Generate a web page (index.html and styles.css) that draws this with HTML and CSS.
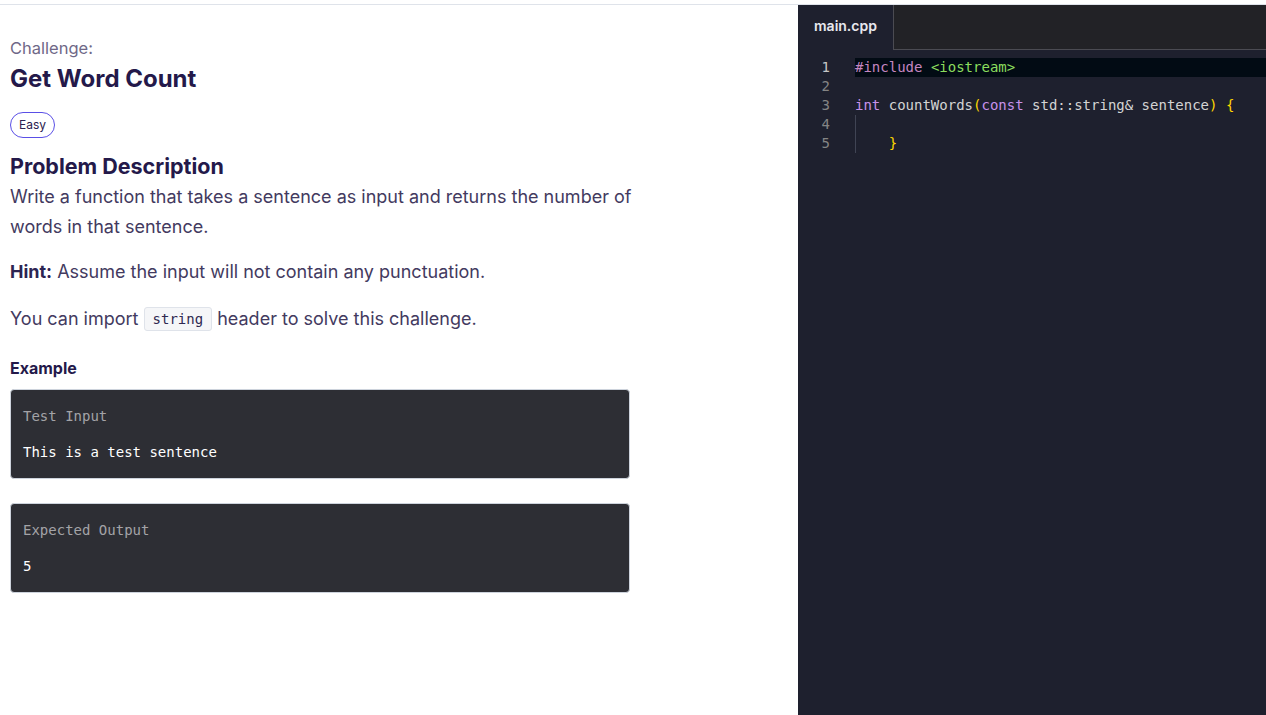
FILE: index.html
```html
<!DOCTYPE html>
<html>
<head>
<meta charset="utf-8">
<link rel="stylesheet" href="styles.css">
</head>
<body>
<div class="topline"></div>
<div class="page">
  <section class="left">
    <div class="content">
      <div class="eyebrow">Challenge:</div>
      <h1 class="title">Get Word Count</h1>
      <span class="badge">Easy</span>
      <h2 class="section-title">Problem Description</h2>
      <p class="para">Write a function that takes a sentence as input and returns the number of words in that sentence.</p>
      <p class="para hint"><strong>Hint:</strong> Assume the input will not contain any punctuation.</p>
      <p class="para import">You can import <code class="inline-code">string</code> header to solve this challenge.</p>
      <h3 class="example-title">Example</h3>
      <div class="example-box">
        <div class="box-label">Test Input</div>
        <div class="box-value">This is a test sentence</div>
      </div>
      <div class="example-box">
        <div class="box-label">Expected Output</div>
        <div class="box-value">5</div>
      </div>
    </div>
  </section>
  <section class="editor">
    <div class="tabbar">
      <div class="tab">main.cpp</div>
      <div class="tab-rest"></div>
    </div>
    <div class="code">
      <div class="line active"><span class="ln">1</span><span class="src"><span class="k-pre">#include</span> <span class="k-inc">&lt;iostream&gt;</span></span></div>
      <div class="line"><span class="ln">2</span><span class="src"></span></div>
      <div class="line"><span class="ln">3</span><span class="src"><span class="k-kw">int</span> countWords<span class="k-br">(</span><span class="k-kw">const</span> std::string&amp; sentence<span class="k-br">)</span> <span class="k-br">{</span></span></div>
      <div class="line"><span class="ln">4</span><span class="src"><span class="guide"></span></span></div>
      <div class="line"><span class="ln">5</span><span class="src"><span class="guide"></span>    <span class="k-br">}</span></span></div>
    </div>
  </section>
</div>
</body>
</html>
```

FILE: styles.css
```css
* { box-sizing: border-box; }
html, body { margin: 0; padding: 0; height: 100%; }
body {
  background: #ffffff;
  font-family: "Inter", "Noto Sans", sans-serif;
  overflow: hidden;
}
.topline {
  height: 5px;
  border-bottom: 1px solid #dfe3ea;
}
.page {
  display: flex;
  height: 710px;
}
.left {
  width: 798px;
  flex: none;
  background: #ffffff;
}
.content {
  width: 660px;
  padding: 33px 0 0 10px;
}
.eyebrow {
  font-size: 16.5px;
  line-height: 20px;
  color: #6f6887;
  font-weight: 400;
}
.title {
  margin: 6px 0 0;
  font-size: 24px;
  line-height: 30px;
  font-weight: 700;
  color: #24194a;
}
.badge {
  display: inline-block;
  margin-top: 18px;
  height: 26px;
  padding: 0 8px;
  border: 1px solid #5a4fe6;
  border-radius: 13px;
  font-size: 12px;
  line-height: 24px;
  color: #2c2250;
}
.section-title {
  margin: 12px 0 0;
  font-size: 21.5px;
  line-height: 32px;
  font-weight: 700;
  color: #24194a;
}
.para {
  margin: 0;
  font-size: 18px;
  line-height: 30px;
  color: #433a60;
}
.hint { margin-top: 15px; }
.hint strong { font-weight: 700; color: #2c2452; }
.import { margin-top: 17px; }
.inline-code {
  display: inline-block;
  font-family: "DejaVu Sans Mono", monospace;
  font-size: 14px;
  line-height: 22px;
  padding: 0 8px;
  border: 1px solid #dfe3ea;
  border-radius: 3px;
  background: #f5f6f8;
  color: #2f2850;
  vertical-align: 1px;
}
.example-title {
  margin: 23px 0 0;
  font-size: 16px;
  line-height: 22px;
  font-weight: 700;
  color: #24194a;
}
.example-box {
  margin-top: 10px;
  height: 90px;
  width: 620px;
  background: #2d2e34;
  border: 1px solid #cdd3dc;
  border-radius: 4px;
  padding: 16px 12px 0;
  font-family: "DejaVu Sans Mono", monospace;
  font-size: 14px;
}
.example-box + .example-box { margin-top: 24px; }
.box-label { color: #a3a3a7; line-height: 20px; }
.box-value { color: #ffffff; line-height: 20px; margin-top: 16px; }

.editor {
  flex: 1;
  background: #1e202e;
  display: flex;
  flex-direction: column;
}
.tabbar {
  display: flex;
  height: 45px;
  background: #222226;
}
.tab {
  width: 95px;
  background: #1e202e;
  color: #e8e8ee;
  font-size: 14px;
  font-weight: 600;
  padding: 12px 0 0 16px;
}
.tab-rest {
  flex: 1;
  border-left: 1px solid #4b4b52;
  border-bottom: 1px solid #4b4b52;
}
.code {
  padding-top: 8px;
  font-family: "DejaVu Sans Mono", monospace;
  font-size: 14px;
}
.line {
  display: flex;
  height: 19px;
  line-height: 19px;
}
.ln {
  width: 57px;
  flex: none;
  padding-right: 25px;
  text-align: right;
  color: #858585;
}
.line.active .ln { color: #c6c6c6; }
.src {
  flex: 1;
  position: relative;
  white-space: pre;
  color: #d4d4d4;
}
.line.active .src { background: #020b14; }
.guide {
  position: absolute;
  left: 0;
  top: 0;
  width: 1px;
  height: 19px;
  background: #404454;
}
.k-pre { color: #c586c0; }
.k-inc { color: #8bdd5e; }
.k-kw { color: #c792ea; }
.k-br { color: #ffd700; }
```
